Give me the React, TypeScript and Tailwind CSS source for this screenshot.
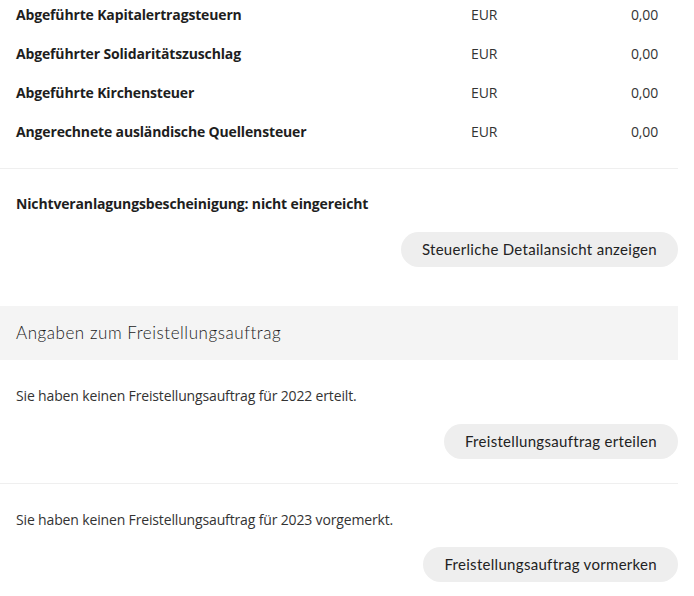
import React from "react";

const ROWS = [
  { label: "Abgeführte Kapitalertragsteuern", currency: "EUR", value: "0,00" },
  { label: "Abgeführter Solidaritätszuschlag", currency: "EUR", value: "0,00" },
  { label: "Abgeführte Kirchensteuer", currency: "EUR", value: "0,00" },
  { label: "Angerechnete ausländische Quellensteuer", currency: "EUR", value: "0,00" },
];

const body = "font-['Open_Sans',sans-serif]";
const accent = "font-['Lato',sans-serif]";

function PillButton({ children }: { children: React.ReactNode }) {
  return (
    <div className="flex justify-end">
      <button
        className={`${accent} h-[35px] rounded-full bg-[#eeeeee] px-[21px] text-[15px] text-[#222222] tracking-[0.3px]`}
      >
        {children}
      </button>
    </div>
  );
}

export default function App() {
  return (
    <div className={`${body} w-[678px] bg-white text-[#1e1e1e]`}>
      {/* Tax rows */}
      <div className="-mt-[5px] flex flex-col">
        {ROWS.map((r) => (
          <div key={r.label} className="flex h-[39px] items-center px-4">
            <span className="flex-1 text-[14px] font-bold tracking-[-0.15px]">{r.label}</span>
            <span className="w-[131px] text-[14px] text-[#333333] tracking-[-0.15px]">{r.currency}</span>
            <span className="w-[60px] pr-1 text-right text-[14px] text-[#333333] tracking-[-0.15px]">
              {r.value}
            </span>
          </div>
        ))}
      </div>

      <div className="mt-[17px] h-px bg-[#efefef]" />

      {/* Nichtveranlagung */}
      <div className="pt-[25px]">
        <p className="px-4 text-[14px] leading-[20px] font-bold tracking-[-0.15px]">
          Nichtveranlagungsbescheinigung: nicht eingereicht
        </p>
        <div className="mt-[18px]">
          <PillButton>Steuerliche Detailansicht anzeigen</PillButton>
        </div>
      </div>

      {/* Freistellungsauftrag */}
      <div className="mt-[39px] flex h-[54px] items-center bg-[#f4f4f4] px-4">
        <h2 className={`${accent} text-[17px] font-light text-[#1a1a1a] tracking-[0.55px]`}>
          Angaben zum Freistellungsauftrag
        </h2>
      </div>

      <div className="pt-[26px]">
        <p className="px-4 text-[14px] leading-[20px] text-[#333333] tracking-[-0.15px]">
          Sie haben keinen Freistellungsauftrag für 2022 erteilt.
        </p>
        <div className="mt-[18px]">
          <PillButton>Freistellungsauftrag erteilen</PillButton>
        </div>
      </div>

      <div className="mt-[24px] h-px bg-[#efefef]" />

      <div className="pt-[26px]">
        <p className="px-4 text-[14px] leading-[20px] text-[#333333] tracking-[-0.15px]">
          Sie haben keinen Freistellungsauftrag für 2023 vorgemerkt.
        </p>
        <div className="mt-[17px]">
          <PillButton>Freistellungsauftrag vormerken</PillButton>
        </div>
      </div>
    </div>
  );
}
